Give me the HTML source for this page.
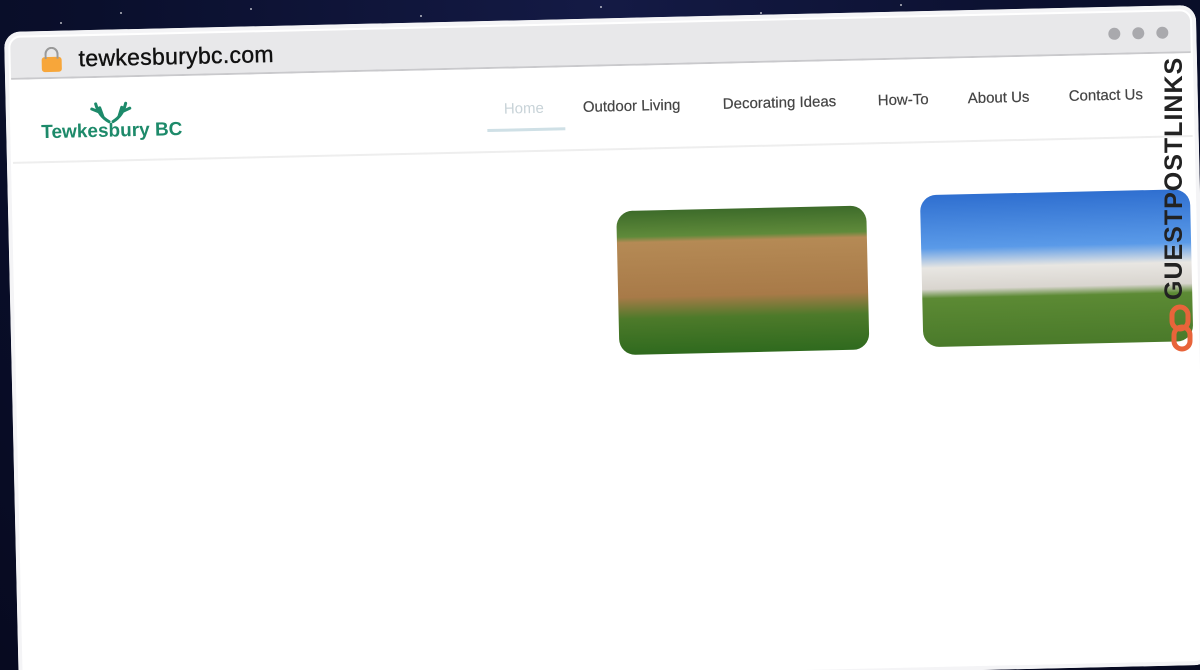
<!DOCTYPE html>
<html><head><style>
html,body{margin:0;padding:0;width:1200px;height:670px;overflow:hidden;background:#0b1030;font-family:"Liberation Sans",sans-serif;}
.wrap{position:absolute;left:0;top:0;width:1200px;height:670px;overflow:hidden}
.bg{position:absolute;inset:0;background:radial-gradient(ellipse at 50% 0%,#141a45 0%,#0a0f2c 60%,#070a20 100%);}
.star{position:absolute;width:2px;height:2px;background:#fff;border-radius:50%;opacity:.7}
.win{position:absolute;left:4px;top:32px;width:1192px;height:660px;background:#fff;border-radius:16px;transform-origin:0 0;transform:rotate(-1.3deg);overflow:hidden;box-shadow:0 0 0 4px #f4f4f6 inset;}
.bar{position:absolute;left:6px;top:6px;right:6px;height:40px;background:#e8e8ea;border-radius:10px 10px 0 0;border-bottom:2px solid #c9c9cc}
.url{position:absolute;left:68px;top:9px;font-size:23px;color:#111;letter-spacing:.3px;-webkit-text-stroke:.4px #111}
.lock{position:absolute;left:31px;top:20px;width:20px;height:15px;background:#f7a63a;border-radius:3px}
.lock:before{content:"";position:absolute;left:3px;top:-10px;width:10px;height:10px;border:2px solid #999;border-bottom:none;border-radius:7px 7px 0 0}
.dot{position:absolute;top:15px;width:12px;height:12px;border-radius:50%;background:#a9a9ad}
.nav{position:absolute;left:6px;right:6px;top:48px;height:82px;border-bottom:2px solid #eee}
.logo{position:absolute;left:29px;top:43px;font-weight:bold;font-size:19px;color:#1d8a6a}
.n{position:absolute;top:32px;font-size:15px;color:#444;-webkit-text-stroke:.2px #444}
.img{position:absolute;border-radius:16px;overflow:hidden}
</style></head><body><div class="wrap">
<div class="bg"></div>
<div class="star" style="left:120px;top:12px"></div><div class="star" style="left:250px;top:8px"></div><div class="star" style="left:420px;top:15px"></div><div class="star" style="left:600px;top:6px"></div><div class="star" style="left:760px;top:12px"></div><div class="star" style="left:900px;top:4px"></div><div class="star" style="left:60px;top:22px"></div><div class="star" style="left:330px;top:26px"></div>
<div class="win">
 <div class="bar">
  <div class="lock"></div>
  <div class="url">tewkesburybc.com</div>
  <div class="dot" style="left:1098px"></div><div class="dot" style="left:1122px"></div><div class="dot" style="left:1146px"></div>
 </div>
 <div class="nav">
  <svg style="position:absolute;left:78px;top:22px" width="42" height="24" viewBox="0 0 42 24" fill="none" stroke="#1d8a6a" stroke-width="3" stroke-linecap="round"><path d="M19 22 C12 18 8 12 6 4 M9 12 L2 9 M13 17 L10 8"/><path d="M23 22 C30 18 34 12 36 4 M33 12 L40 9 M29 17 L32 8"/></svg>
  <div class="logo">Tewkesbury BC</div>
  <div class="n" style="left:492px;color:#c8d3d8;-webkit-text-stroke:0">Home</div>
  <div style="position:absolute;left:475px;top:60px;width:78px;height:3px;background:#cfe0e6"></div>
  <div class="n" style="left:571px">Outdoor Living</div>
  <div class="n" style="left:711px">Decorating Ideas</div>
  <div class="n" style="left:866px">How-To</div>
  <div class="n" style="left:956px">About Us</div>
  <div class="n" style="left:1057px">Contact Us</div>
 </div>
 <div class="img" style="left:608px;top:193px;width:250px;height:144px;background:linear-gradient(180deg,#3d6b2a 0%,#5f8a3a 18%,#b58a55 22%,#a87a48 60%,#4d7a2a 75%,#2f6a1e 100%)"></div>
 <div class="img" style="left:912px;top:184px;width:270px;height:152px;background:linear-gradient(180deg,#2f6fd0 0%,#5a9ae8 35%,#e8e6e2 48%,#d9d5cf 62%,#5c8a34 68%,#4a7a2a 100%)"></div>
</div>
<div style="position:absolute;left:1160px;top:300px;transform-origin:0 0;transform:rotate(-90deg);font-weight:bold;font-size:25px;color:#222;letter-spacing:1px;white-space:nowrap">GUESTPOSTLINKS</div>
<svg style="position:absolute;left:1168px;top:304px" width="26" height="48" viewBox="0 0 26 48" fill="none" stroke="#e8643a" stroke-width="5"><rect x="4" y="3" width="16" height="22" rx="8"/><rect x="6" y="23" width="16" height="22" rx="8"/></svg>
</div></body></html>
